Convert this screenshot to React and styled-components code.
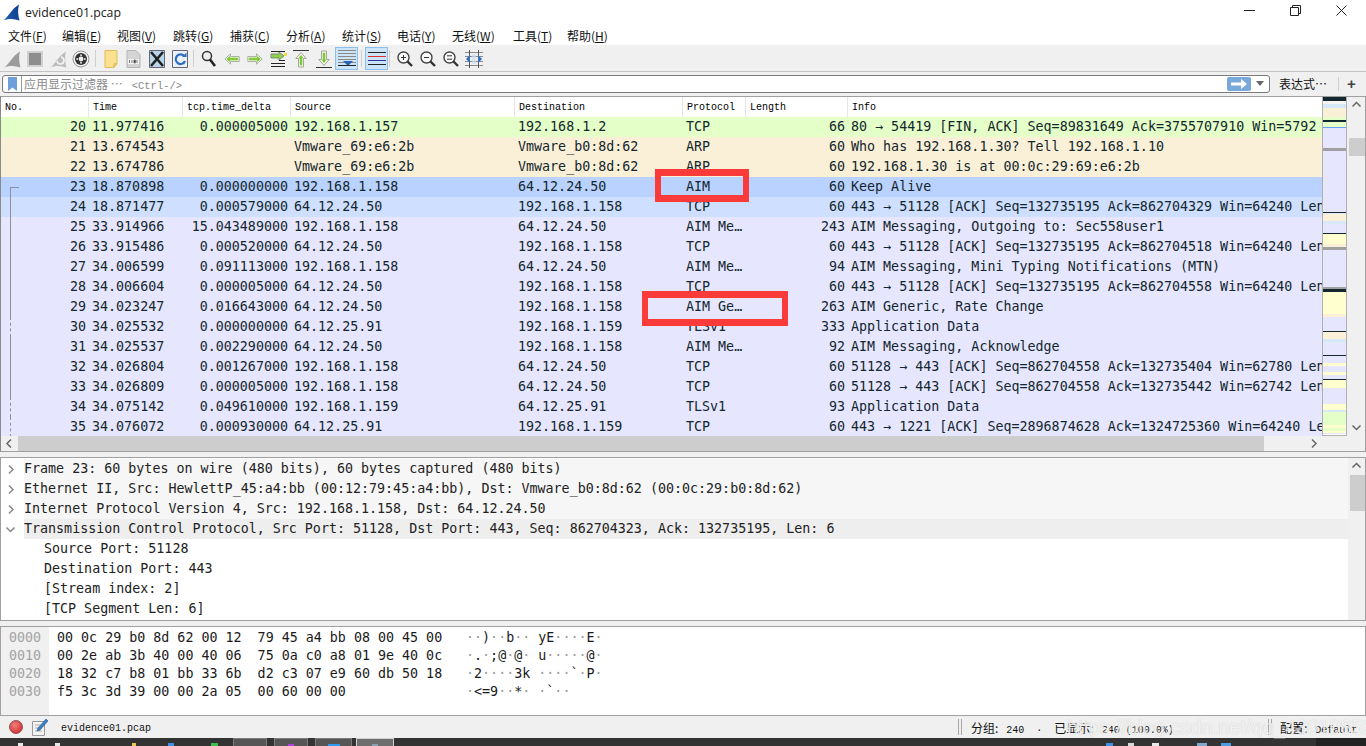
import React from "react";
import styled, { createGlobalStyle } from "styled-components";

const MONO = `"DejaVu Sans Mono", monospace`;
const SMALL = `"Liberation Mono", "Noto Sans CJK SC", monospace`;
const UI = `"Noto Sans CJK SC", "Noto Sans", sans-serif`;

const Global = createGlobalStyle`
  html, body { margin: 0; padding: 0; background: #fff; overflow: hidden; }
  * { box-sizing: border-box; }
`;

const Win = styled.div`
  position: relative;
  width: 1366px;
  height: 746px;
  overflow: hidden;
  display: flex;
  flex-direction: column;
  font-family: ${UI};
  color: #111;
`;

const TitleBar = styled.div`
  height: 26px;
  flex: none;
  display: flex;
  align-items: center;
  padding-left: 2px;
  font: 12.3px "Open Sans", sans-serif;
  color: #222;
  svg { margin-right: 5px; margin-top: -3px; }
`;

const TitleText = styled.span`
  flex: 1;
  margin-top: -1px;
`;

const WinButtons = styled.div`
  display: flex;
  align-self: flex-start;
  padding-right: 2px;
`;

const WinBtn = styled.div`
  width: 46px;
  height: 20px;
  display: flex;
  align-items: center;
  justify-content: center;
  svg { margin: 0; }
`;

const MenuBar = styled.div`
  height: 20px;
  flex: none;
  display: flex;
  align-items: center;
  padding-left: 8px;
  gap: 16px;
  font-size: 12px;
  border-bottom: 1px solid #f0f0f0;
  u { text-underline-offset: 1px; }
`;

const MenuItem = styled.span`
  white-space: nowrap;
  width: ${(p) => p.$w}px;
`;

const Toolbar = styled.div`
  height: 26px;
  flex: none;
  display: flex;
  align-items: center;
  background: #f0f0f0;
  border-bottom: 1px solid #c4c4c4;
`;

const ToolBtn = styled.div`
  width: 23px;
  height: 23px;
  display: flex;
  align-items: center;
  justify-content: center;
  ${(p) => p.$on && "background: #cce4f7; border: 1px solid #8cc0ea;"}
`;

const ToolSep = styled.div`
  width: 1px;
  height: 17px;
  margin: 0 3px 0 ${(p) => p.$l}px;
  background: #cfcfcf;
`;

const FilterBar = styled.div`
  height: 24px;
  flex: none;
  display: flex;
  align-items: center;
  padding: 0 2px;
  background: #f0f0f0;
`;

const FilterBox = styled.div`
  width: 1268px;
  height: 18px;
  display: flex;
  align-items: center;
  background: #fff;
  border: 1px solid #7a7a7a;
  border-radius: 3px;
  margin-top: -1px;
`;

const Bookmark = styled.div`
  width: 19px;
  height: 100%;
  display: flex;
  align-items: center;
  justify-content: center;
  border-right: 1px solid #9a9a9a;
`;

const Placeholder = styled.div`
  flex: 1;
  padding-left: 2px;
  font-size: 12px;
  color: #8a8a8a;
  white-space: nowrap;
`;

const PlaceHint = styled.span`
  font: 10.5px ${SMALL};
  margin-left: 9px;
`;

const ApplyBtn = styled.div`
  width: 24px;
  height: 14px;
  border-radius: 2px;
  background: #79a8dc;
  display: flex;
  align-items: center;
  justify-content: center;
`;

const Caret = styled.div`
  width: 18px;
  display: flex;
  justify-content: center;
  &::after {
    content: "";
    border: 4px solid transparent;
    border-top: 5px solid #666;
    border-bottom: 0;
  }
`;

const FilterExpr = styled.div`
  width: 69px;
  padding-left: 9px;
  font-size: 12px;
  white-space: nowrap;
  border-right: 1px solid #cfcfcf;
  line-height: 14px;
`;

const PlusBtn = styled.div`
  flex: 1;
  text-align: center;
  font: bold 15px/14px "Liberation Sans", sans-serif;
  color: #444;
`;

const Pane = styled.div`
  border: 1px solid #a0a0a0;
  flex: none;
  height: ${(p) => p.$h}px;
  display: flex;
  background: #fff;
  overflow: hidden;
  position: relative;
`;

const PacketPane = styled(Pane)`
  flex-direction: column;
  border-left-color: #8a8a8a;
`;

const PacketTop = styled.div`
  flex: 1;
  min-height: 0;
  display: flex;
`;

const PacketList = styled.div`
  width: 1321px;
  flex: none;
  overflow: hidden;
`;

const Grid = styled.div`
  display: grid;
  grid-template-columns: 88px 94px 108px 224px 168px 63px 102px 474px;
  height: 20px;
  white-space: pre;
  overflow: hidden;
`;

const HeadRow = styled(Grid)`
  font: 10px/22px ${SMALL};
  color: #000;
  background: #fff;
`;

const HeadCell = styled.div`
  padding-left: 4px;
  height: 20px;
  border-right: 1px solid #e6e6e6;
  &:last-child { border-right: 0; }
`;

const Row = styled(Grid)`
  background: ${(p) => p.$bg};
  color: #12272e;
  font: 13.33px/20px ${MONO};
`;

const Cell = styled.div`
  position: relative;
  padding: 0 3px;
  overflow: hidden;
  text-align: ${(p) => (p.$right ? "right" : "left")};
`;

/* conversation bracket in the No. column */
const Rel = styled.div`
  position: absolute;
  left: 9px;
  width: 9px;
  top: ${(p) => (p.$kind === "start" ? "10px" : "0")};
  bottom: 0;
  border-left: 1px ${(p) => (p.$kind === "dash" ? "dashed" : "solid")} #8f8f9c;
  border-top: ${(p) => (p.$kind === "start" ? "1px solid #8f8f9c" : "0")};
`;

const MapBox = styled.div`
  width: 25px;
  flex: none;
  height: 100%;
  border-left: 1px solid #b0b0b0;
  border-right: 1px solid #b0b0b0;
  border-bottom: 1px solid #b0b0b0;
  svg { display: block; }
`;

const VBar = styled.div`
  flex: ${(p) => (p.$w ? "none" : 1)};
  width: ${(p) => (p.$w ? `${p.$w}px` : "auto")};
  background: #f0f0f0;
  display: flex;
  flex-direction: column;
  align-items: center;
  justify-content: space-between;
  position: relative;
`;

const Arrow = styled.div`
  height: 17px;
  width: 17px;
  margin-left: ${(p) => p.$ml || 0}px;
  display: flex;
  align-items: center;
  justify-content: center;
  flex: none;
`;

const Thumb = styled.div`
  position: absolute;
  left: 2px;
  right: 0;
  top: ${(p) => p.$top}px;
  height: ${(p) => p.$h}px;
  background: #cdcdcd;
`;

const HBar = styled.div`
  height: 15px;
  flex: none;
  background: #f0f0f0;
  display: flex;
  align-items: center;
`;

const HThumb = styled.div`
  width: 1246px;
  height: 100%;
  background: #cdcdcd;
`;

const Gap = styled.div`
  height: ${(p) => p.$h}px;
  flex: none;
  background: #f0f0f0;
`;

const TreeList = styled.div`
  flex: 1;
  min-width: 0;
  overflow: hidden;
  padding-top: 1px;
  font: 13.33px/20px ${MONO};
  color: #222;
  white-space: pre;
`;

const TreeRow = styled.div`
  height: 20px;
  display: flex;
  align-items: center;
  padding-left: ${(p) => (p.$child ? 43 : 0)}px;
`;

const Twist = styled.div`
  width: 23px;
  flex: none;
  height: 100%;
  display: flex;
  align-items: center;
  justify-content: center;
  padding-right: 4px;
`;

const TreeText = styled.div`
  flex: 1;
  height: 100%;
  background: ${(p) => p.$bg || "transparent"};
`;

const HexOffsets = styled.div`
  width: 48px;
  flex: none;
  height: 100%;
  background: #f0f0f0;
  padding: 2px 0 0 8px;
  font: 13.33px/18px ${MONO};
  color: #a3a3a3;
  white-space: pre;
`;

const HexBytes = styled.div`
  width: 409px;
  flex: none;
  padding: 2px 0 0 8px;
  font: 13.33px/18px ${MONO};
  color: #1a1a1a;
  white-space: pre;
`;

const HexAscii = styled(HexBytes)`
  width: auto;
  flex: 1;
`;

const Dot = styled.span`
  color: #9c9c9c;
`;

const StatusBar = styled.div`
  height: 22px;
  flex: none;
  display: flex;
  align-items: center;
  background: #f0f0f0;
  padding-left: 9px;
  font: 10px ${SMALL};
  color: #111;
`;

const RedDot = styled.div`
  width: 14px;
  height: 14px;
  border-radius: 50%;
  background: radial-gradient(circle at 40% 35%, #f08080, #d83a3a 70%);
  border: 1px solid #8f5050;
  margin-right: 9px;
`;

const StatusFile = styled.div`
  margin: 2px 0 0 13px;
  width: 897px;
  flex: none;
`;

const StatusGrip = styled.div`
  width: 4px;
  height: 16px;
  flex: none;
  border-left: 1px solid #a8a8a8;
  border-right: 1px solid #a8a8a8;
`;

const StatusText = styled.div`
  white-space: pre;
  padding-left: ${(p) => p.$pad}px;
  width: ${(p) => p.$w}px;
  flex: none;
  span { font-family: ${UI}; font-size: 12px; padding-right: 2px; }
`;

const TaskBar = styled.div`
  height: 8px;
  flex: none;
  background: linear-gradient(90deg, #333 0, #333 1316px, #232323 1316px);
  display: flex;
  align-items: flex-start;
  overflow: hidden;
`;

const TaskTip = styled.div`
  flex: none;
  width: ${(p) => p.$w}px;
  height: 3px;
  margin: 5px 0 0 ${(p) => p.$ml}px;
  background: ${(p) => p.$c};
`;

const TaskBtn = styled.div`
  flex: none;
  width: ${(p) => p.$w}px;
  height: 8px;
  margin-left: ${(p) => p.$ml}px;
  display: flex;
  justify-content: center;
  align-items: flex-end;
  background: ${(p) => (p.$on ? "#6e6e6e" : "#565656")};
  border: 1px solid ${(p) => (p.$on ? "#d0d0d0" : "#7c7c7c")};
  border-bottom: 0;
`;

const BtnTip = styled.div`
  width: ${(p) => p.$w}px;
  height: 2px;
  background: ${(p) => p.$c};
`;

const Watermark = styled.div`
  position: absolute;
  left: 1067px;
  top: 716px;
  font: 20px/22px "Liberation Sans", sans-serif;
  color: rgba(255, 255, 255, 0.75);
  text-shadow: 0 0 1px rgba(150, 150, 150, 0.5);
  white-space: nowrap;
  pointer-events: none;
`;

const RedBox = styled.div`
  position: absolute;
  left: ${(p) => p.$x}px;
  top: ${(p) => p.$y}px;
  width: ${(p) => p.$w}px;
  height: ${(p) => p.$h}px;
  border: 7px solid #fb3a3a;
  border-width: 7px 6px;
`;

const BG = {
  green: "#e4ffc7",
  tan: "#faf0d7",
  sel: "#bad2ff",
  rel: "#cfdfff",
  aim: "#e7e6ff",
};

const ack = (a, b, w) => `443 → 51128 [ACK] Seq=${a} Ack=${b} Win=${w} Len=0`;

const rows = [
  ["20", "11.977416", "0.000005000", "192.168.1.157", "192.168.1.2", "TCP", "66", "80 → 54419 [FIN, ACK] Seq=89831649 Ack=3755707910 Win=5792 Len=0", "green"],
  ["21", "13.674543", "", "Vmware_69:e6:2b", "Vmware_b0:8d:62", "ARP", "60", "Who has 192.168.1.30? Tell 192.168.1.10", "tan"],
  ["22", "13.674786", "", "Vmware_69:e6:2b", "Vmware_b0:8d:62", "ARP", "60", "192.168.1.30 is at 00:0c:29:69:e6:2b", "tan"],
  ["23", "18.870898", "0.000000000", "192.168.1.158", "64.12.24.50", "AIM", "60", "Keep Alive", "sel", "start"],
  ["24", "18.871477", "0.000579000", "64.12.24.50", "192.168.1.158", "TCP", "60", ack("132735195", "862704329", "64240"), "rel", "line"],
  ["25", "33.914966", "15.043489000", "192.168.1.158", "64.12.24.50", "AIM Me…", "243", "AIM Messaging, Outgoing to: Sec558user1", "aim", "line"],
  ["26", "33.915486", "0.000520000", "64.12.24.50", "192.168.1.158", "TCP", "60", ack("132735195", "862704518", "64240"), "aim", "line"],
  ["27", "34.006599", "0.091113000", "192.168.1.158", "64.12.24.50", "AIM Me…", "94", "AIM Messaging, Mini Typing Notifications (MTN)", "aim", "line"],
  ["28", "34.006604", "0.000005000", "64.12.24.50", "192.168.1.158", "TCP", "60", ack("132735195", "862704558", "64240"), "aim", "line"],
  ["29", "34.023247", "0.016643000", "64.12.24.50", "192.168.1.158", "AIM Ge…", "263", "AIM Generic, Rate Change", "aim", "line"],
  ["30", "34.025532", "0.000000000", "64.12.25.91", "192.168.1.159", "TLSv1", "333", "Application Data", "aim", "dash"],
  ["31", "34.025537", "0.002290000", "64.12.24.50", "192.168.1.158", "AIM Me…", "92", "AIM Messaging, Acknowledge", "aim", "line"],
  ["32", "34.026804", "0.001267000", "192.168.1.158", "64.12.24.50", "TCP", "60", "51128 → 443 [ACK] Seq=862704558 Ack=132735404 Win=62780 Len=0", "aim", "line"],
  ["33", "34.026809", "0.000005000", "192.168.1.158", "64.12.24.50", "TCP", "60", "51128 → 443 [ACK] Seq=862704558 Ack=132735442 Win=62742 Len=0", "aim", "line"],
  ["34", "34.075142", "0.049610000", "192.168.1.159", "64.12.25.91", "TLSv1", "93", "Application Data", "aim", "dash"],
  ["35", "34.076072", "0.000930000", "64.12.25.91", "192.168.1.159", "TCP", "60", "443 → 1221 [ACK] Seq=2896874628 Ack=1324725360 Win=64240 Len=0", "aim", "dash"],
];

const heads = ["No.", "Time", "tcp.time_delta", "Source", "Destination", "Protocol", "Length", "Info"];

const menus = [
  ["文件", "F", 38],
  ["编辑", "E", 39],
  ["视图", "V", 40],
  ["跳转", "G", 41],
  ["捕获", "C", 40],
  ["分析", "A", 40],
  ["统计", "S", 39],
  ["电话", "Y", 39],
  ["无线", "W", 45],
  ["工具", "T", 38],
  ["帮助", "H", 38],
];

const tree = [
  "Frame 23: 60 bytes on wire (480 bits), 60 bytes captured (480 bits)",
  "Ethernet II, Src: HewlettP_45:a4:bb (00:12:79:45:a4:bb), Dst: Vmware_b0:8d:62 (00:0c:29:b0:8d:62)",
  "Internet Protocol Version 4, Src: 192.168.1.158, Dst: 64.12.24.50",
  "Transmission Control Protocol, Src Port: 51128, Dst Port: 443, Seq: 862704323, Ack: 132735195, Len: 6",
];

const treeKids = ["Source Port: 51128", "Destination Port: 443", "[Stream index: 2]", "[TCP Segment Len: 6]"];

const hexLines = [
  "00 0c 29 b0 8d 62 00 12  79 45 a4 bb 08 00 45 00",
  "00 2e ab 3b 40 00 40 06  75 0a c0 a8 01 9e 40 0c",
  "18 32 c7 b8 01 bb 33 6b  d2 c3 07 e9 60 db 50 18",
  "f5 3c 3d 39 00 00 2a 05  00 60 00 00",
];

const asciiLines = [
  "··)··b·· yE····E·",
  "·.·;@·@· u·····@·",
  "·2····3k ····`·P·",
  "·<=9··*· ·`··",
];

// packet map stripes: [y from pane top, height, colour]
const D = "#12272e";
const L = "#e7e6ff";
const Y = "#ffffd0";
const T = "#faf0d7";
const B = "#d7e8f8";
const G = "#e4ffc7";
const S = "#a0a0a0";
const stripes = [
  [0, 4, D], [4, 3, "#f4f4f4"], [7, 4, B], [11, 9, T], [20, 3, G], [23, 2, D], [25, 5, G], [30, 1, "#6aa0f0"],
  [31, 20, L], [51, 3, S], [54, 61, L], [115, 1, D], [117, 7, T], [124, 3, B], [127, 9, L], [136, 1, D],
  [137, 10, Y], [147, 3, T], [150, 3, S], [153, 37, L], [190, 2, S], [192, 3, D], [195, 22, Y], [217, 3, T],
  [220, 13, L], [234, 1, D], [235, 7, T], [242, 3, B], [245, 13, L], [258, 1, D], [259, 7, L], [266, 3, Y],
  [269, 6, L], [275, 3, Y], [278, 4, L], [282, 1, D], [283, 8, Y], [291, 16, L], [307, 6, Y], [313, 2, B],
  [315, 13, G], [328, 3, Y], [331, 3, G], [334, 2, Y],
];

const FIN = "M1 17.500C6 15 9 6 17 1.500c-1.500 5-1 11 .5 16C12 15.500 6 15.500 1 17.500z";

const IconShark = () => (
  <svg width="18" height="18" viewBox="0 0 18 18">
    <defs>
      <linearGradient id="fin" x1="0" y1="0" x2="1" y2="0">
        <stop offset="0" stopColor="#1f62b4" />
        <stop offset="1" stopColor="#0f3f8c" />
      </linearGradient>
    </defs>
    <path d={FIN} fill="url(#fin)" />
  </svg>
);

const Lines = ({ ys, x1 = 3, x2 = 17, c = "#222" }) => (
  <>
    {ys.map((y) => (
      <line key={y} x1={x1} x2={x2} y1={y} y2={y} stroke={c} strokeWidth="1" />
    ))}
  </>
);

const Glass = ({ mark }) => (
  <svg width="18" height="18" viewBox="0 0 18 18" fill="none">
    <circle cx="7.500" cy="7.500" r="5.500" stroke="#444" strokeWidth="1.400" fill="#fafafa" />
    <path d="M11.500 11.500L16 16" stroke="#333" strokeWidth="2.400" />
    <path d={mark === "eq" ? "M5 5.800h5M5 9.200h5" : "M5 7.500h5"} stroke="#333" />
    {mark === "plus" && <path d="M7.500 5v5" stroke="#333" />}
  </svg>
);

const HArrow = ({ dir }) => (
  <svg width="16" height="12" viewBox="0 0 16 12">
    <g transform={dir === "left" ? "" : "matrix(-1 0 0 1 16 0)"}>
      <path d="M.8 6L6.500.8v2.700h8.700v5H6.500v2.700z" fill="#f2f6ea" stroke="#a9b3a0" />
      <path d="M3 6l2.500-2.300v1.500h8.200v1.600H5.500v1.500z" fill="#7fc832" stroke="#7fc832" />
    </g>
  </svg>
);

const VArrow = ({ dir }) => (
  <svg width="18" height="20" viewBox="0 0 18 20">
    <g transform={dir === "up" ? "" : "matrix(1 0 0 -1 0 20)"}>
      <path d="M1 1.500h16" stroke="#333" />
      <path d="M9 3.500l5.200 6h-2.700v8.500h-5V9.500H3.800z" fill="#f2f6ea" stroke="#a0a89a" />
      <path d="M9 6l2.500 3.300h-1.300v7H7.800v-7H6.500z" fill="#7fc832" />
    </g>
  </svg>
);

const tools = [
  <svg key="a" width="18" height="18" viewBox="0 0 18 18"><path d={FIN} fill="#9c9c9c" /></svg>,
  <svg key="b" width="16" height="16" viewBox="0 0 16 16"><rect x="1" y="1" width="14" height="14" fill="#8e8e8e" stroke="#d0d0d0" strokeWidth="2" /></svg>,
  <svg key="c" width="18" height="18" viewBox="0 0 18 18"><path d={FIN} fill="#bdbdbd" /><path d="M12 7a3.500 3.500 0 1 1-4 4" stroke="#f4f4f4" strokeWidth="1.600" fill="none" /></svg>,
  <svg key="d" width="18" height="18" viewBox="0 0 18 18" fill="none"><circle cx="9" cy="9" r="8" stroke="#999" /><circle cx="9" cy="9" r="6" fill="#333" /><circle cx="9" cy="9" r="2.400" fill="#eee" /><circle cx="9" cy="5.200" r="1" fill="#ddd" /><circle cx="9" cy="12.800" r="1" fill="#ddd" /><circle cx="5.200" cy="9" r="1" fill="#ddd" /><circle cx="12.800" cy="9" r="1" fill="#ddd" /></svg>,
  3,
  <svg key="e" width="14" height="18" viewBox="0 0 14 18"><path d="M1 .5h12v13.500h-3v3.500H1z" fill="#fbe08f" stroke="#e2bd5c" /><path d="M10 14v3.500l3-3.500z" fill="#f4ce6d" stroke="#e2bd5c" /></svg>,
  <svg key="f" width="15" height="18" viewBox="0 0 15 18"><path d="M1 .5h9l4 4v13H1z" fill="#d4d4d4" stroke="#b5b5b5" /><rect x="2" y="9" width="11" height="5" fill="#f4f4f4" /><path d="M3.500 10v3M6 10v3M8 10h1.500v3H8zM11 10v3" stroke="#777" /></svg>,
  <svg key="g" width="16" height="18" viewBox="0 0 16 18"><path d="M.5.5h15v17H.5z" fill="#b9d4ea" stroke="#667" /><path d="M2 2l12 14M14 2L2 16" stroke="#222" strokeWidth="2.600" /></svg>,
  <svg key="h" width="16" height="18" viewBox="0 0 16 18" fill="none"><path d="M.5.5h15v17H.5z" fill="#eaf2fa" stroke="#667" /><path d="M12.500 6.500A4.800 4.800 0 1 0 13 11" stroke="#2d6ec4" strokeWidth="2.200" /><path d="M10 7h4.500V2.500z" fill="#2d6ec4" /></svg>,
  2,
  <svg key="i" width="16" height="18" viewBox="0 0 16 18" fill="none"><circle cx="6" cy="6" r="4.500" stroke="#333" strokeWidth="1.500" fill="#eee" /><path d="M9 9.500l5 6.500" stroke="#222" strokeWidth="2.600" /></svg>,
  <HArrow key="j" dir="left" />,
  <HArrow key="k" dir="right" />,
  <svg key="l" width="20" height="18" viewBox="0 0 20 18"><Lines ys={[1.5, 13.5, 16.5]} /><path d="M16 6l-5-4v2H3v4h8v2z" fill="#8fd14f" stroke="#7d8f70" /><rect x="16" y="3" width="3" height="3" fill="#f2d94e" /><Lines ys={[10.5]} x1={11} /></svg>,
  <VArrow key="m" dir="up" />,
  <VArrow key="n" dir="down" />,
  <ToolBtn key="o" $on>
    <svg width="18" height="19" viewBox="0 0 18 19"><Lines ys={[1.5, 4.5, 7.5, 10.5, 13.5, 16.5]} x1={0} x2={18} c="#888" /><path d="M5 12h10l-5 5z" fill="#2a62b8" /><path d="M0 16.500h18" stroke="#222" /></svg>
  </ToolBtn>,
  3,
  <ToolBtn key="p" $on>
    <svg width="18" height="16" viewBox="0 0 18 16"><Lines ys={[1.5]} x1={0} x2={18} c="#222" /><Lines ys={[5.5]} x1={0} x2={18} c="#e0302c" /><Lines ys={[9.5]} x1={0} x2={18} c="#3434a0" /><Lines ys={[13.5]} x1={0} x2={18} c="#222" /></svg>
  </ToolBtn>,
  1,
  <Glass key="q" mark="plus" />,
  <Glass key="r" mark="minus" />,
  <Glass key="s" mark="eq" />,
  <svg key="t" width="18" height="18" viewBox="0 0 18 18"><path d="M0 2.500h18M0 15.500h18M0 6.500h18M0 11.500h18" stroke="#888" /><path d="M4.500 0v18M13.500 0v18" stroke="#555" /><path d="M1 9l4-4v8zM17 9l-4-4v8z" fill="#2f6fc0" /><path d="M7 4h4v10H7z" fill="#cfe0f4" opacity="0.7" /></svg>,
];

const Chev = ({ dir, c = "#666" }) => {
  const d = {
    up: "M1.500 6.500L5.500 2.500l4 4",
    down: "M1.500 3.500l4 4 4-4",
    left: "M7 1.500L3 5.500l4 4",
    right: "M4 1.500l4 4-4 4",
  }[dir];
  return (
    <svg width="11" height="11" viewBox="0 0 11 11" fill="none">
      <path d={d} stroke={c} strokeWidth="1.500" />
    </svg>
  );
};

const asciiSpans = (line) =>
  [...line].map((ch, i) => (ch === "·" ? <Dot key={i}>·</Dot> : ch));

export default function App() {
  return (
    <Win>
      <Global />
      <TitleBar>
        <IconShark />
        <TitleText>evidence01.pcap</TitleText>
        <WinButtons>
          <WinBtn>
            <svg width="11" height="11" viewBox="0 0 11 11"><path d="M0 5.500h11" stroke="#222" /></svg>
          </WinBtn>
          <WinBtn>
            <svg width="11" height="11" viewBox="0 0 11 11" fill="none"><path d="M.5 2.500h8v8h-8zM2.500 2.500v-2h8v8h-2" stroke="#222" /></svg>
          </WinBtn>
          <WinBtn>
            <svg width="11" height="11" viewBox="0 0 11 11"><path d="M.5.500l10 10M10.500.500l-10 10" stroke="#222" /></svg>
          </WinBtn>
        </WinButtons>
      </TitleBar>

      <MenuBar>
        {menus.map(([t, k, w]) => (
          <MenuItem key={k} $w={w}>
            {t}(<u>{k}</u>)
          </MenuItem>
        ))}
      </MenuBar>

      <Toolbar>
        {tools.map((t, i) =>
          typeof t === "number" ? (
            <ToolSep key={i} $l={t} />
          ) : t.type === ToolBtn ? (
            t
          ) : (
            <ToolBtn key={i}>{t}</ToolBtn>
          )
        )}
      </Toolbar>

      <FilterBar>
        <FilterBox>
          <Bookmark>
            <svg width="9" height="14" viewBox="0 0 9 14"><path d="M0 0h9v14L4.500 10.500 0 14z" fill="#6f9fd8" /></svg>
          </Bookmark>
          <Placeholder>
            应用显示过滤器 ⋯<PlaceHint>&lt;Ctrl-/&gt;</PlaceHint>
          </Placeholder>
          <ApplyBtn>
            <svg width="18" height="10" viewBox="0 0 18 10"><path d="M1 3.500h10V0l6 5-6 5V6.500H1z" fill="#fff" /></svg>
          </ApplyBtn>
          <Caret />
        </FilterBox>
        <FilterExpr>表达式…</FilterExpr>
        <PlusBtn>+</PlusBtn>
      </FilterBar>

      <PacketPane $h={356}>
        <PacketTop>
          <PacketList>
            <HeadRow>
              {heads.map((h) => (
                <HeadCell key={h}>{h}</HeadCell>
              ))}
            </HeadRow>
            {rows.map(([no, time, delta, src, dst, proto, len, info, bg, rel]) => (
              <Row key={no} $bg={BG[bg]}>
                <Cell $right>
                  {rel && <Rel $kind={rel} />}
                  {no}
                </Cell>
                <Cell>{time}</Cell>
                <Cell $right>{delta}</Cell>
                <Cell>{src}</Cell>
                <Cell>{dst}</Cell>
                <Cell>{proto}</Cell>
                <Cell $right>{len}</Cell>
                <Cell>{info}</Cell>
              </Row>
            ))}
          </PacketList>
          <MapBox>
            <svg width="23" height="337" viewBox="0 0 23 337">
              <rect width="23" height="337" fill={L} />
              {stripes.map(([y, h, c], i) => (
                <rect key={i} x="0" y={y} width="23" height={h} fill={c} />
              ))}
            </svg>
          </MapBox>
          <VBar>
            <Arrow><Chev dir="up" /></Arrow>
            <Thumb $top={41} $h={18} />
            <Arrow><Chev dir="down" /></Arrow>
          </VBar>
        </PacketTop>
        <HBar>
          <Arrow><Chev dir="left" /></Arrow>
          <HThumb />
          <Arrow $ml={41}><Chev dir="right" /></Arrow>
        </HBar>
      </PacketPane>

      <Gap $h={5} />

      <Pane $h={164}>
        <TreeList>
          {tree.map((t, i) => (
            <TreeRow key={t}>
              <Twist>
                <Chev dir={i === 3 ? "down" : "right"} c="#888" />
              </Twist>
              <TreeText $bg={i === 3 ? "#eeeeee" : "#f6f6f6"}>{t}</TreeText>
            </TreeRow>
          ))}
          {treeKids.map((t) => (
            <TreeRow key={t} $child>
              <TreeText>{t}</TreeText>
            </TreeRow>
          ))}
        </TreeList>
        <VBar $w={17}>
          <Arrow><Chev dir="up" /></Arrow>
          <Thumb $top={17} $h={36} />
        </VBar>
      </Pane>

      <Gap $h={5} />

      <Pane $h={90}>
        <HexOffsets>{"0000\n0010\n0020\n0030"}</HexOffsets>
        <HexBytes>{hexLines.join("\n")}</HexBytes>
        <HexAscii>
          {asciiLines.map((l) => (
            <div key={l}>{asciiSpans(l)}</div>
          ))}
        </HexAscii>
      </Pane>

      <StatusBar>
        <RedDot />
        <svg width="16" height="18" viewBox="0 0 16 18">
          <path d="M.5 3.500h12v14H.5z" fill="#f3f3f3" stroke="#999" />
          <path d="M3 7h7M3 10h7M3 13h7" stroke="#aaa" />
          <path d="M6 10l8-9 2 2-8 9-3 1z" fill="#3a7fc4" stroke="#24598f" strokeWidth="0.6" />
        </svg>
        <StatusFile>evidence01.pcap</StatusFile>
        <StatusGrip />
        <StatusText $pad={9} $w={306}>
          <span>分组:</span> 240  ·  <span>已显示:</span> 240 (100.0%)
        </StatusText>
        <StatusGrip />
        <StatusText $pad={8} $w={88}>
          <span>配置:</span> Default
        </StatusText>
      </StatusBar>

      <TaskBar>
        <TaskTip $ml={18} $w={5} $c="#e8e8e8" />
        <TaskTip $ml={32} $w={5} $c="#e8e8e8" />
        <TaskTip $ml={72} $w={4} $c="#e9c94e" />
        <TaskTip $ml={32} $w={6} $c="#3f8fe8" />
        <TaskTip $ml={37} $w={7} $c="#3cc04c" />
        <TaskBtn $ml={15} $w={34} />
        <TaskBtn $ml={7} $w={34}><BtnTip $w={6} $c="#b040e0" /></TaskBtn>
        <TaskBtn $ml={7} $w={37}><BtnTip $w={12} $c="#2f9bf0" /></TaskBtn>
        <TaskBtn $ml={4} $w={38} $on><BtnTip $w={6} $c="#8aa0b0" /></TaskBtn>
        <TaskTip $ml={712} $w={7} $c="#3f8fe8" />
        <TaskTip $ml={15} $w={6} $c="#d8d8d8" />
        <TaskTip $ml={18} $w={7} $c="#e8e8e8" />
        <TaskTip $ml={38} $w={10} $c="#7fa8cc" />
        <TaskTip $ml={14} $w={10} $c="#4f9be0" />
      </TaskBar>

      <Watermark>https://blog.csdn.net/qq_43010852</Watermark>
      <RedBox $x={655} $y={169} $w={94} $h={33} />
      <RedBox $x={642} $y={291} $w={146} $h={35} />
    </Win>
  );
}
